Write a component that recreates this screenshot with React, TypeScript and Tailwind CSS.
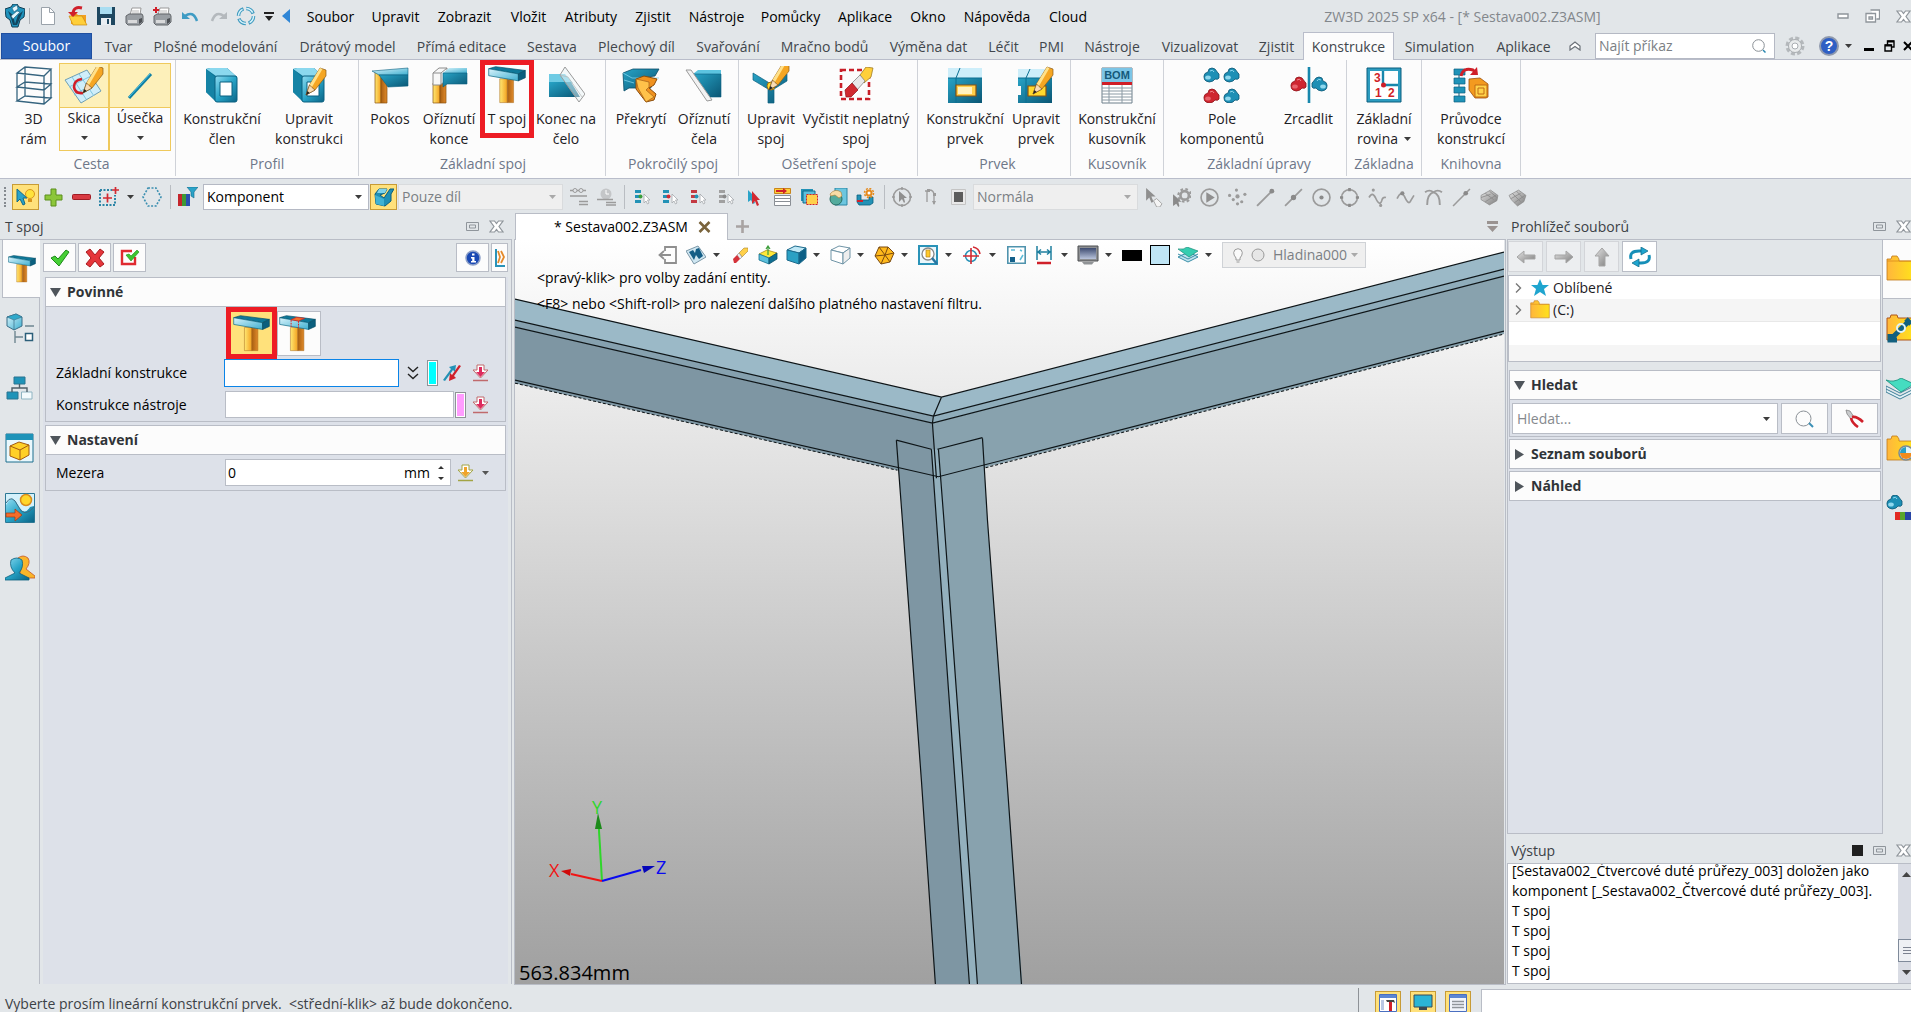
import React from "react";

type Kids = { children?: React.ReactNode };

function Svg({ w, h, v, children }: { w: number; h: number; v: string } & Kids) {
  return (
    <svg width={w} height={h} viewBox={v} fill="none" className="block shrink-0" aria-hidden="true">
      {children}
    </svg>
  );
}

function SharedGradients() {
  return (
    <svg width="0" height="0" className="absolute" aria-hidden="true">
      <defs>
        <linearGradient id="teal" x1="0" y1="0" x2="1" y2="1">
          <stop offset="0" stopColor="#8fdcf2" />
          <stop offset=".5" stopColor="#27a3c6" />
          <stop offset="1" stopColor="#0b6486" />
        </linearGradient>
        <linearGradient id="tealDark" x1="0" y1="0" x2="1" y2="1">
          <stop offset="0" stopColor="#27a3c6" />
          <stop offset="1" stopColor="#0a5674" />
        </linearGradient>
        <linearGradient id="tealLight" x1="0" y1="0" x2="1" y2="1">
          <stop offset="0" stopColor="#d8f3fb" />
          <stop offset="1" stopColor="#3eafd0" />
        </linearGradient>
        <linearGradient id="gold" x1="0" y1="0" x2="1" y2="0">
          <stop offset="0" stopColor="#ffe873" />
          <stop offset="1" stopColor="#f3a01f" />
        </linearGradient>
        <linearGradient id="folder" x1="0" y1="0" x2="1" y2="0">
          <stop offset="0" stopColor="#ffb63c" />
          <stop offset="1" stopColor="#ffe11c" />
        </linearGradient>
        <linearGradient id="brown" x1="0" y1="0" x2="1" y2="0">
          <stop offset="0" stopColor="#a85f12" />
          <stop offset="1" stopColor="#e08a2a" />
        </linearGradient>
        <linearGradient id="gray" x1="0" y1="0" x2="1" y2="1">
          <stop offset="0" stopColor="#e4e4e4" />
          <stop offset="1" stopColor="#7c7c7c" />
        </linearGradient>
        <linearGradient id="screen" x1="0" y1="0" x2="0" y2="1">
          <stop offset="0" stopColor="#3d4b70" />
          <stop offset="1" stopColor="#b9c4dc" />
        </linearGradient>
      </defs>
    </svg>
  );
}

function Caret({ c = "#3c3c3c" }: { c?: string }) {
  return (
    <Svg w={7} h={4} v="0 0 7 4">
      <path d="M0 0h7L3.500 4z" fill={c} />
    </Svg>
  );
}

const Pencil = () => (
  <g>
    <path d="M15 28l3.500-10L29 1l6 2v6L24 23z" fill="#f5a623" stroke="#8a5a18" strokeWidth=".7" />
    <path d="M18.500 18L29 1l2.500 1L21 20z" fill="#ffe18a" />
    <path d="M15 28l3.500-10 2.500 2.500L24 23z" fill="#f9dcb4" stroke="#6a4a20" strokeWidth=".6" />
    <path d="M15 28l1.400-4 2.300 2z" fill="#222" />
  </g>
);

const Tube = () => (
  <g>
    <path d="M2 2l4-1h17l10 9v22l-2 3H13L2 25z" fill="#0d7394" />
    <path d="M2 2l4-1h17l9 8H12z" fill="#8bd8ee" />
    <path d="M2 2l9 8v24L2 25z" fill="#1583a5" />
    <path d="M11 11q0-2 2-2h18q2 0 2 2v22q0 2-2 2H13q-2 0-2-2z" fill="url(#teal)" stroke="#0b6080" />
    <path d="M16 15h12v14H16z" fill="#fff" stroke="#0b6080" />
  </g>
);

const TJoint = ({ s = 36, split = false }: { s?: number; split?: boolean }) => (
  <Svg w={s} h={s} v="0 0 110 108">
    <path d="M34 36h22v69H34z" fill="url(#gold)" stroke="#a8691c" strokeWidth="1.500" />
    <path d="M56 38h18v67H56z" fill="url(#brown)" stroke="#a8691c" strokeWidth="1.500" />
    <path d="M2 7L22 1l86 11-20 10z" fill="#0f7898" stroke="#084d66" strokeWidth="2" />
    <path d="M2 7l86 15v20L2 27z" fill="url(#tealLight)" stroke="#0a6480" strokeWidth="2" />
    <path d="M88 22l20-10v21L88 42z" fill="#0b5f7e" stroke="#084d66" strokeWidth="2" />
    {split && (
      <g>
        <path d="M36 13l16-7 24 3-18 8z" fill="#f3702c" stroke="#e02020" strokeWidth="2" />
        <path d="M36 14v20M58 17v20" stroke="#e02020" strokeWidth="3" strokeDasharray="5 3" />
      </g>
    )}
  </Svg>
);

const Blob = ({ x, y, red = false }: { x: number; y: number; red?: boolean }) => (
  <g transform={`translate(${x} ${y})`}>
    <path
      d="M1 8q0-3 4-4l1-3q3-2 6 0l3 4 1 1v4q-1 2-4 1l-2 2q-4 2-7 0-2-1-2-4z"
      fill={red ? "#cf2630" : "#1d8fb5"}
      stroke={red ? "#8e1118" : "#0a5674"}
      strokeWidth=".8"
    />
    <ellipse cx="5" cy="9.500" rx="2.800" ry="2" fill={red ? "#e8636a" : "#8fd8ee"} />
    <path d="M7 3q3-2 4 1" stroke={red ? "#f08a8f" : "#8fd8ee"} />
  </g>
);

const art = {
  frame: (
    <Svg w={38} h={40} v="0 0 38 40">
      <g stroke="#35647f" strokeWidth="1.300">
        <path d="M2 8L10 2l26 2-7 7zM2 22l8-5 26 2-7 6zM2 36l8-5 26 2-7 6zM2 8v28M10 2v29M36 4v29M29 11v28" />
      </g>
    </Svg>
  ),
  sketch: (
    <Svg w={40} h={38} v="0 0 40 38">
      <path d="M1 13L23 3l14 21-20 12z" fill="#cfeefa" stroke="#6f9fb4" />
      <path d="M8 10l14 22M15 7l15 22M5 20l22-11M10 28l22-13" stroke="#7fc6e0" />
      <path d="M18 12q-8 1-8 8 1 7 9 6" stroke="#d11d28" strokeWidth="2.600" />
      <g transform="translate(4 -2)">
        <Pencil />
      </g>
    </Svg>
  ),
  line: (
    <Svg w={26} h={28} v="0 0 26 28">
      <path d="M2 26L24 2" stroke="#0f7fa4" strokeWidth="3" />
      <path d="M2 25L23 2" stroke="#4cc0e2" strokeWidth="1" />
    </Svg>
  ),
  tube: (
    <Svg w={36} h={36} v="0 0 36 36">
      <Tube />
    </Svg>
  ),
  tubeEdit: (
    <Svg w={36} h={36} v="0 0 36 36">
      <Tube />
      <Pencil />
    </Svg>
  ),
  miter: (
    <Svg w={38} h={38} v="0 0 38 38">
      <path d="M4 6h6v31H4z" fill="url(#gold)" stroke="#8a5210" strokeWidth=".7" />
      <path d="M10 12l6 4v21h-6z" fill="url(#brown)" stroke="#8a5210" strokeWidth=".7" />
      <path d="M1 5l36-3v7H8z" fill="url(#tealLight)" stroke="#0b6080" strokeWidth=".6" />
      <path d="M8 9h29v11l-20 1z" fill="url(#tealDark)" stroke="#0b6080" strokeWidth=".6" />
    </Svg>
  ),
  trimEnd: (
    <Svg w={38} h={38} v="0 0 38 38">
      <path d="M3 17h7v20H3z" fill="url(#gold)" stroke="#8a5210" strokeWidth=".7" />
      <path d="M10 17h6v20h-6z" fill="url(#brown)" stroke="#8a5210" strokeWidth=".7" />
      <path d="M3 7l6-5h8v12l-7 5H3zM3 7h8v11M11 7l6-5" fill="#f7f7f7" stroke="#8d8d8d" />
      <path d="M13 7l6-5h18v5z" fill="url(#tealLight)" />
      <path d="M13 7h24v11H17l-4 3z" fill="url(#tealDark)" stroke="#0b6080" strokeWidth=".6" />
    </Svg>
  ),
  endFace: (
    <Svg w={38} h={38} v="0 0 38 38">
      <path d="M2 8h16l8 9H2z" fill="#6fcbe4" />
      <path d="M2 16h22l9 15H2z" fill="url(#tealDark)" />
      <path d="M13 9l5-8 20 27-6 8z" fill="#eaf3f6" fillOpacity=".5" stroke="#9a9a9a" />
      <path d="M13 9l8 2 14 20" stroke="#b5b5b5" strokeWidth=".7" />
    </Svg>
  ),
  overlap: (
    <Svg w={40} h={36} v="0 0 40 36">
      <path d="M2 6l10-4h26l-4 7-8 1 4 6v5H8l-5 3z" fill="url(#tealDark)" stroke="#0a4d68" strokeWidth=".8" />
      <path d="M2 6l9 5h27M3 13l10 3" stroke="#7fd2ea" strokeWidth=".8" />
      <path d="M15 12l8-3 13 3-3 6-5 3 7 6-2 6-8 2-10-13z" fill="#f0921f" stroke="#8a4d0c" />
      <path d="M15 12l13 3v5l-3 3 8 7-8 5-8-14z" fill="#ffc24a" stroke="#a2601a" strokeWidth=".7" />
    </Svg>
  ),
  trimFace: (
    <Svg w={38} h={34} v="0 0 38 34">
      <path d="M8 6l5-4h23v4z" fill="#5cc4e0" />
      <path d="M9 6h27v23H23z" fill="url(#tealDark)" stroke="#0b6080" strokeWidth=".6" />
      <path d="M1 2h5l21 30-5 1z" fill="#f2f2f2" stroke="#9a9a9a" />
    </Svg>
  ),
  editJoint: (
    <Svg w={38} h={38} v="0 0 38 38">
      <path d="M1 7l18 11 16-10v7L22 23v14h-6V23L1 14z" fill="url(#tealDark)" stroke="#0b6080" strokeWidth=".7" />
      <circle cx="19" cy="20" r="4" fill="#ffd92e" stroke="#a06d10" />
      <g transform="translate(2 -4)">
        <Pencil />
      </g>
    </Svg>
  ),
  cleanJoint: (
    <Svg w={36} h={36} v="0 0 36 36">
      <path d="M3 3h28v29H3z" stroke="#c81f28" strokeWidth="2.600" strokeDasharray="5 3" />
      <path d="M8 24L25 4l9-2-2 9-15 18-7 2z" fill="#fff" />
      <path d="M22 8l6-8 7 1-2 9-7 6z" fill="#ffcf3a" stroke="#94701a" strokeWidth=".7" />
      <path d="M14 16l8-8 5 6-8 9z" fill="#e8e8e8" stroke="#777" strokeWidth=".7" />
      <path d="M7 23l7-7 6 7-7 7H8z" fill="#d02a30" stroke="#8e1118" strokeWidth=".7" />
    </Svg>
  ),
  feature: (
    <Svg w={34} h={36} v="0 0 34 36">
      <path d="M0 1h34v10H0z" fill="#cdeefa" />
      <path d="M0 11h34v25H0z" fill="url(#tealDark)" />
      <path d="M12 1L8 11v25M0 11h34" stroke="#0b6f92" />
      <path d="M8 18h20v11H8z" fill="#ffcf4a" stroke="#8a5210" strokeWidth="1.200" />
      <path d="M10 20h14v7H10z" fill="#fff2c0" />
    </Svg>
  ),
  featureEdit: (
    <Svg w={36} h={38} v="0 0 36 38">
      <path d="M0 3h34v9H0z" fill="#cdeefa" />
      <path d="M0 12h34v25H0v-8h3v-9H0z" fill="url(#tealDark)" />
      <path d="M12 3L8 12v25M0 12h34" stroke="#0b6f92" />
      <path d="M10 20h18v10H10z" fill="#ffd92e" stroke="#8a5210" strokeWidth="1.200" />
      <Pencil />
    </Svg>
  ),
  bom: (
    <Svg w={32} h={37} v="0 0 32 37">
      <path d="M1 1h30v35H1z" fill="#fff" stroke="#6d7f8a" />
      <path d="M1 1h30v14H1z" fill="#7cc5e6" />
      <path d="M1 15h30v3H1z" fill="#d01f27" />
      <path d="M1 21h30M1 24h30M1 27h30M1 30h30M1 33h30M8 18v18M21 18v18" stroke="#8b9aa4" />
      <text x="16" y="12" textAnchor="middle" fontSize="11" fontWeight="700" fontFamily="Liberation Sans, sans-serif" fill="#15597a">
        BOM
      </text>
    </Svg>
  ),
  pattern: (
    <Svg w={38} h={36} v="0 0 38 36">
      <Blob x={0} y={1} />
      <Blob x={20} y={1} />
      <Blob x={0} y={22} red />
      <Blob x={20} y={22} />
    </Svg>
  ),
  mirror: (
    <Svg w={40} h={36} v="0 0 40 36">
      <path d="M20 0v36" stroke="#1787ac" strokeWidth="2.600" />
      <Blob x={1} y={10} red />
      <g transform="translate(40 0) scale(-1 1)">
        <Blob x={1} y={10} />
      </g>
    </Svg>
  ),
  datum: (
    <Svg w={36} h={36} v="0 0 36 36">
      <path d="M1 1h34v34H1z" fill="#2c9cc0" stroke="#0b5f7e" />
      <path d="M4 4h28v28H4z" fill="#fff" />
      <path d="M17 4v15M18 18h14" stroke="#1787ac" strokeWidth="2.400" />
      <circle cx="17.500" cy="18" r="2.500" fill="#cf1f28" />
      <g fontSize="12" fontWeight="700" fontFamily="Liberation Sans, sans-serif" fill="#cf1f28">
        <text x="8" y="15">3</text>
        <text x="9" y="30">1</text>
        <text x="22" y="30">2</text>
      </g>
    </Svg>
  ),
  wizard: (
    <Svg w={36} h={36} v="0 0 36 36">
      <path d="M6 2v32" stroke="#0b5f7e" />
      <path d="M1 2h11v6H1zM1 11h11v6H1zM1 20h11v6H1zM1 29h11v6H1z" fill="#1f93b8" stroke="#0b5f7e" strokeWidth=".7" />
      <path d="M8 9q2-9 12-6l2 2" stroke="#cf1f28" strokeWidth="3" />
      <path d="M17 8h8l-1-8z" fill="#cf1f28" />
      <path d="M16 12l11-1 8 6v13l-2 1H22l-6-8z" fill="#f39a1f" stroke="#9a4d0a" strokeWidth=".8" />
      <path d="M22 18h12v12H22zM25 21h6v6h-6z" fill="#ffd24a" stroke="#c06a14" />
    </Svg>
  ),
};

const menus = [
  ["Soubor", "w-[65px]"],
  ["Upravit", "w-[65px]"],
  ["Zobrazit", "w-[73px]"],
  ["Vložit", "w-[55px]"],
  ["Atributy", "w-[70px]"],
  ["Zjistit", "w-[54px]"],
  ["Nástroje", "w-[73px]"],
  ["Pomůcky", "w-[75px]"],
  ["Aplikace", "w-[74px]"],
  ["Okno", "w-[52px]"],
  ["Nápověda", "w-[86px]"],
  ["Cloud", "w-[56px]"],
];

const tabs = [
  ["Tvar", "w-[47px]"],
  ["Plošné modelování", "w-[147px]"],
  ["Drátový model", "w-[117px]"],
  ["Přímá editace", "w-[111px]"],
  ["Sestava", "w-[70px]"],
  ["Plechový díl", "w-[99px]"],
  ["Svařování", "w-[84px]"],
  ["Mračno bodů", "w-[109px]"],
  ["Výměna dat", "w-[99px]"],
  ["Léčit", "w-[51px]"],
  ["PMI", "w-[45px]"],
  ["Nástroje", "w-[76px]"],
  ["Vizualizovat", "w-[100px]"],
  ["Zjistit", "w-[53px]"],
  ["Konstrukce", "w-[91px]"],
  ["Simulation", "w-[91px]"],
  ["Aplikace", "w-[77px]"],
];

const MiniPin = () => (
  <Svg w={13} h={9} v="0 0 13 9">
    <path d="M.5.5h12v8H.5zM3.500 3h6v3h-6z" stroke="#8f959b" />
  </Svg>
);
const MiniClose = () => (
  <Svg w={15} h={13} v="0 0 15 13">
    <path d="M1 1h4.500l2 2.500 2-2.500H14l-4 5.500 4 5.500H9.500l-2-2.500-2 2.500H1l4-5.500z" fill="#fff" stroke="#8f959b" strokeWidth="1.200" />
  </Svg>
);

function TitleBar() {
  return (
    <header className="flex h-8 shrink-0 items-center">
      <div className="flex w-[298px] shrink-0 items-center pl-[5px]">
        <Svg w={20} h={24} v="0 0 20 24">
          <path d="M0 5l6-2 2-3h4l2 3 6 2-1 8-4 3-2 7H7l-2-7-4-3z" fill="#1f93bd" stroke="#123f55" />
          <path d="M3 7l5 4 2 9 3-9 5-4-3 7-3 7H8l-2-7z" fill="#12465f" />
          <path d="M7 4l5-3 1 4-4 3zM6 12l6-5 3 1-7 7z" fill="#e2f5fb" stroke="#1d5d78" strokeWidth=".6" />
        </Svg>
        <span className="mx-1 h-4 w-px bg-[#a9aeb4]" />
        <button aria-label="Nový" className="flex w-7 justify-center">
          <Svg w={14} h={18} v="0 0 14 18">
            <path d="M.5.500h8l5 5v12H.5z" fill="#fff" stroke="#9aa2aa" />
            <path d="M8.500.5v5h5" stroke="#9aa2aa" />
          </Svg>
        </button>
        <button aria-label="Otevřít" className="ml-0.5 flex w-7 justify-center">
          <Svg w={20} h={20} v="0 0 20 20">
            <path d="M3 8l5-1 2 2h8v9H3z" fill="#f3a01f" />
            <path d="M1 10h13l5 9H5z" fill="#ffcf3a" stroke="#c98a17" strokeWidth=".7" />
            <path d="M14 2Q6 0 5 7" stroke="#d0202a" strokeWidth="3" />
            <path d="M0 6h10l-5 5z" fill="#d0202a" />
          </Svg>
        </button>
        <button aria-label="Uložit" className="flex w-7 justify-center">
          <Svg w={20} h={20} v="0 0 20 20">
            <path d="M1 1h18v18H1z" fill="#1e4760" />
            <path d="M4 1h12v7H4z" fill="#a9ddf1" />
            <path d="M5 12h10v7H5z" fill="#e9eef2" />
            <path d="M11 13h2v5h-2z" fill="#1e4760" />
          </Svg>
        </button>
        {[false, true].map((plus) => (
          <button key={String(plus)} aria-label={plus ? "Dávkový tisk" : "Tisk"} className="flex w-7 justify-center">
            <Svg w={19} h={19} v="0 0 19 19">
              <path d="M5 8l2-7h9l-1 7z" fill="#fff" stroke="#999" />
              <path d="M7 4h7M7 6h7" stroke="#bbb" />
              <path d="M1 9l3-2h13l1 2v6l-3 3H3l-2-2z" fill="#9a9fa4" stroke="#62666a" />
              <path d="M3 13h9v3H3z" fill="#d9dadb" />
              <path d="M14 12l3-1v4l-3 2z" fill="#4c5054" />
              {plus && <path d="M3 0v6M0 3h6" stroke="#d0202a" strokeWidth="2" />}
            </Svg>
          </button>
        ))}
        <button aria-label="Zpět" className="flex w-7 justify-center">
          <Svg w={17} h={11} v="0 0 17 11">
            <path d="M3 5q8-6 12 5" stroke="#3f9cc4" strokeWidth="2.500" />
            <path d="M0 1v7h8z" fill="#3f9cc4" />
          </Svg>
        </button>
        <button aria-label="Vpřed" className="flex w-7 justify-center">
          <Svg w={17} h={11} v="0 0 17 11">
            <path d="M14 5Q6-1 2 10" stroke="#b4b9bd" strokeWidth="2.500" />
            <path d="M17 1v7H9z" fill="#b4b9bd" />
          </Svg>
        </button>
        <button aria-label="Obnovit" className="flex w-7 justify-center">
          <Svg w={20} h={20} v="0 0 20 20">
            <circle cx="10" cy="10" r="7.500" stroke="#3e9abf" strokeWidth="3.500" strokeDasharray="9 2.780" />
            <circle cx="10" cy="10" r="7.500" stroke="#d8f2fb" strokeWidth="1.500" strokeDasharray="8 3.780" />
          </Svg>
        </button>
        <button aria-label="Více" className="ml-1 mr-2 flex">
          <Svg w={10} h={9} v="0 0 10 9">
            <path d="M0 0h10v2H0zM1 4h8L5 9z" fill="#222" />
          </Svg>
        </button>
        <button aria-label="Sbalit menu" className="flex">
          <Svg w={8} h={14} v="0 0 8 14">
            <path d="M8 0v14L0 7z" fill="#2f86d6" />
          </Svg>
        </button>
      </div>
      <nav className="flex pt-0.5 text-black">
        {menus.map(([t, w]) => (
          <button key={t} className={w + " flex justify-center whitespace-nowrap"}>
            {t}
          </button>
        ))}
      </nav>
      <div className="flex-1 pl-[92px] pt-0.5 text-center text-[#82878c]">ZW3D 2025 SP x64 - [* Sestava002.Z3ASM]</div>
      <div className="ml-[100px] flex shrink-0 items-center gap-4">
        <button aria-label="Minimalizovat">
          <Svg w={12} h={6} v="0 0 12 6">
            <path d="M1 1h10v4H1z" fill="#fff" stroke="#8f959b" strokeWidth="1.400" />
          </Svg>
        </button>
        <button aria-label="Obnovit okno">
          <Svg w={15} h={14} v="0 0 15 14">
            <path d="M5.500 1h9v9h-3M1 4.500h9.500V13H1zM4 8h3.500v2H4z" fill="#fff" stroke="#8f959b" strokeWidth="1.300" />
          </Svg>
        </button>
        <button aria-label="Zavřít">
          <MiniClose />
        </button>
      </div>
    </header>
  );
}

function TabRow() {
  return (
    <div className="flex h-7 shrink-0 items-stretch border-b border-[#b9bdca]">
      <button className="mx-px mt-px w-[91px] border border-[#1f4fa0] bg-[#2a62b8] text-white">Soubor</button>
      <nav className="ml-0.5 flex text-[#41464c]">
        {tabs.map(([t, w], i) =>
          t === "Konstrukce" ? (
            <button key={i} className={w + " -mb-px flex items-center justify-center border border-b-0 border-[#b9bdca] bg-[#fcfcfc]"}>
              {t}
            </button>
          ) : (
            <button key={i} className={w + " flex items-center justify-center whitespace-nowrap pt-0.5"}>
              {t}
            </button>
          ),
        )}
      </nav>
      <div className="flex flex-1 items-center justify-end">
        <button aria-label="Sbalit pás">
          <Svg w={12} h={10} v="0 0 12 10">
            <path d="M1 5l5-4 5 4v4L6 5.500 1 9z" fill="#fff" stroke="#6b7178" strokeWidth="1.200" />
          </Svg>
        </button>
        <div className="ml-3.5 flex h-[26px] w-[180px] items-center border border-[#b5b9c4] bg-white pr-2">
          <input aria-label="Najít příkaz" placeholder="Najít příkaz" className="min-w-0 flex-1 bg-transparent pl-[3px] outline-none placeholder:text-[#7b7f84]" />
          <Svg w={14} h={14} v="0 0 14 14">
            <circle cx="6.500" cy="6.500" r="5.800" stroke="#8a9096" />
            <path d="M11 11l2.500 2.500" stroke="#2a87b0" strokeWidth="1.500" />
          </Svg>
        </div>
        <button aria-label="Nastavení aplikace" className="ml-2.5">
          <Svg w={20} h={20} v="0 0 20 20">
            <circle cx="10" cy="10" r="8" stroke="#b4b8bb" strokeWidth="3" strokeDasharray="4 2.280" />
            <circle cx="10" cy="10" r="6.500" fill="#e9ebec" stroke="#a9adb1" />
            <circle cx="10" cy="10" r="3" fill="#fff" stroke="#a9adb1" />
          </Svg>
        </button>
        <button aria-label="Nápověda" className="ml-3.5 flex items-center gap-1.5">
          <Svg w={20} h={20} v="0 0 20 20">
            <circle cx="10" cy="10" r="9" fill="#2f5fc4" stroke="#8f99ad" strokeWidth="2" />
            <text x="10" y="15" textAnchor="middle" fontSize="14" fontWeight="700" fontFamily="Liberation Sans, sans-serif" fill="#fff">
              ?
            </text>
          </Svg>
          <Caret />
        </button>
        <button aria-label="Minimalizovat dokument" className="ml-3 flex h-2.5 items-end">
          <span className="h-[3px] w-2.5 bg-black" />
        </button>
        <button aria-label="Obnovit dokument" className="ml-2.5">
          <Svg w={11} h={12} v="0 0 11 12">
            <path d="M3.500 5V1H10v6H8M1 5h6.500v6H1z" stroke="#000" strokeWidth="1.400" />
            <path d="M3.500 1.500H10M1 5.500h6.500" stroke="#000" strokeWidth="2" />
          </Svg>
        </button>
        <button aria-label="Zavřít dokument" className="ml-2">
          <Svg w={8} h={10} v="0 0 8 10">
            <path d="M1 1l8 8M1 9l8-8" stroke="#000" strokeWidth="2" />
          </Svg>
        </button>
      </div>
    </div>
  );
}

type Btn = { w: string; a: string; b?: string; icon: React.ReactNode; hot?: boolean; mark?: boolean; caret?: boolean };

function RibbonButton({ w, a, b, icon, hot, mark, caret }: Btn) {
  if (hot) {
    return (
      <button className={w + " flex h-[88px] flex-col items-center border border-[#efc95c]"}>
        <span className="flex h-11 w-full items-center justify-center border-b border-[#efc95c] bg-[#fdf0ba]">{icon}</span>
        <span className="h-5 leading-5">{a}</span>
        <span className="flex h-5 items-center">
          <Caret />
        </span>
      </button>
    );
  }
  return (
    <button className={w + " relative flex flex-col items-center whitespace-nowrap leading-5"}>
      <span className="mb-0.5 flex h-11 items-center justify-center">{icon}</span>
      <span>{a}</span>
      {b && (
        <span className="flex items-center gap-1.5">
          {b}
          {caret && <Caret />}
        </span>
      )}
      {mark && <span className="absolute -top-[3px] left-px h-[78px] w-[54px] border-[5px] border-[#ed1c24]" />}
    </button>
  );
}

const ribbon: { name: string; w: string; btns: Btn[] }[] = [
  {
    name: "Cesta",
    w: "w-[176px] pl-2",
    btns: [
      { w: "w-[51px]", a: "3D", b: "rám", icon: art.frame },
      { w: "w-[50px]", a: "Skica", icon: art.sketch, hot: true },
      { w: "w-[62px]", a: "Úsečka", icon: art.line, hot: true },
    ],
  },
  {
    name: "Profil",
    w: "w-[183px]",
    btns: [
      { w: "w-[92px]", a: "Konstrukční", b: "člen", icon: art.tube },
      { w: "w-[82px]", a: "Upravit", b: "konstrukci", icon: art.tubeEdit },
    ],
  },
  {
    name: "Základní spoj",
    w: "w-[247px] pl-0.5",
    btns: [
      { w: "w-[58px]", a: "Pokos", icon: art.miter },
      { w: "w-[60px]", a: "Oříznutí", b: "konce", icon: art.trimEnd },
      { w: "w-[56px]", a: "T spoj", icon: <TJoint s={38} />, mark: true },
      { w: "w-[62px]", a: "Konec na", b: "čelo", icon: art.endFace },
    ],
  },
  {
    name: "Pokročilý spoj",
    w: "w-[133px] pl-0.5",
    btns: [
      { w: "w-[66px]", a: "Překrytí", icon: art.overlap },
      { w: "w-[60px]", a: "Oříznutí", b: "čela", icon: art.trimFace },
    ],
  },
  {
    name: "Ošetření spoje",
    w: "w-[179px] pl-0.5",
    btns: [
      { w: "w-[60px]", a: "Upravit", b: "spoj", icon: art.editJoint },
      { w: "w-[110px]", a: "Vyčistit neplatný", b: "spoj", icon: art.cleanJoint },
    ],
  },
  {
    name: "Prvek",
    w: "w-[153px] pl-[7px]",
    btns: [
      { w: "w-20", a: "Konstrukční", b: "prvek", icon: art.feature },
      { w: "w-[62px]", a: "Upravit", b: "prvek", icon: art.featureEdit },
    ],
  },
  { name: "Kusovník", w: "w-[93px]", btns: [{ w: "w-[92px]", a: "Konstrukční", b: "kusovník", icon: art.bom }] },
  {
    name: "Základní úpravy",
    w: "w-[183px] pl-2",
    btns: [
      { w: "w-[100px]", a: "Pole", b: "komponentů", icon: art.pattern },
      { w: "w-[73px]", a: "Zrcadlit", icon: art.mirror },
    ],
  },
  { name: "Základna", w: "w-[75px]", btns: [{ w: "w-[74px]", a: "Základní", b: "rovina", icon: art.datum, caret: true }] },
  { name: "Knihovna", w: "w-[99px]", btns: [{ w: "w-[98px]", a: "Průvodce", b: "konstrukcí", icon: art.wizard }] },
];

function Ribbon() {
  return (
    <div className="flex h-[119px] shrink-0 border-b border-[#b9bdca] bg-[#fcfcfc] pb-0.5 text-[#1d2024]">
      {ribbon.map((g) => (
        <section key={g.name} className={g.w + " flex shrink-0 flex-col border-r border-[#cfd2d8] pt-[3px]"}>
          <div className="flex h-[91px] items-start">
            {g.btns.map((b, i) => (
              <RibbonButton key={i} {...b} />
            ))}
          </div>
          <h2 className="whitespace-nowrap text-center leading-5 text-[#6e7789]">{g.name}</h2>
        </section>
      ))}
    </div>
  );
}

function Drop({ label, value, w, off = false }: { label: string; value: string; w: string; off?: boolean }) {
  return (
    <span className={w + " relative mx-px flex h-[26px] shrink-0 items-center border " + (off ? "border-[#d9dbdd] bg-[#efefef]" : "border-[#b5b9c4] bg-white")}>
      <select
        aria-label={label}
        disabled={off}
        className={"h-full w-full appearance-none bg-transparent pl-[3px] outline-none " + (off ? "text-[#7b7f84]" : "text-black")}
      >
        <option>{value}</option>
      </select>
      <span className="pointer-events-none absolute right-1.5">
        <Caret c={off ? "#a9a9a9" : "#3c3c3c"} />
      </span>
    </span>
  );
}

function Tool({ label, children }: { label: string } & Kids) {
  return (
    <button aria-label={label} className="flex w-7 shrink-0 items-center justify-center">
      {children}
    </button>
  );
}

const Sep = () => (
  <span className="flex w-2 shrink-0 justify-center">
    <span className="h-6 w-px bg-[#b9bdc2]" />
  </span>
);

const ListPick = ({ c, d }: { c: string; d: string }) => (
  <Svg w={16} h={16} v="0 0 16 16">
    <path d="M1 1h6v3H1zM1 6h6v3H1zM1 11h6v3H1z" fill={c} />
    <circle cx="6.500" cy="7.500" r="2" fill={d} />
    <path d="M10 5v9l2-2 1.500 3 1.500-1-1.500-3H16z" fill="#fff" stroke="#a4a8ac" strokeWidth=".8" />
  </Svg>
);

const G = "#9b9b9b";

const grayTools: React.ReactNode[] = [
  <g>
    <path d="M2 0v12l3-3 2 5 2-1-2-5h4z" fill="#8f8f8f" />
    <path d="M9 12l3-2 5 5-2 3h-3z" fill="#f4f4f4" stroke={G} strokeWidth=".8" />
  </g>,
  <g>
    <circle cx="12" cy="7" r="4" stroke={G} strokeWidth="2.500" />
    <circle cx="12" cy="7" r="6" stroke={G} strokeWidth="2" strokeDasharray="2.500 2.200" />
    <path d="M1 6v11l3-2 2 3 1-1-1-4h3z" fill="#8a8a8a" />
  </g>,
  <g>
    <circle cx="9" cy="9" r="8" stroke={G} strokeWidth="1.600" />
    <path d="M6 4l8 5-8 5z" fill="#8f8f8f" />
  </g>,
  <g fill={G}>
    <circle cx="1.500" cy="7" r="1.500" />
    <circle cx="5" cy="11" r="1.500" />
    <circle cx="9" cy="8" r="2" />
    <circle cx="8" cy="2" r="1.500" />
    <circle cx="13" cy="13" r="1.500" />
    <circle cx="16" cy="6" r="1.500" />
    <circle cx="9" cy="15" r="1.500" />
  </g>,
  <g>
    <path d="M1 17L16 2" stroke={G} strokeWidth="1.800" />
    <circle cx="15" cy="3" r="2.300" fill="#8a8a8a" />
  </g>,
  <g>
    <path d="M1 17L17 1" stroke={G} strokeWidth="1.600" />
    <circle cx="9" cy="9" r="2.500" fill="#8a8a8a" />
  </g>,
  <g>
    <circle cx="9" cy="9" r="8" stroke={G} strokeWidth="1.600" />
    <circle cx="9" cy="9" r="2" fill="#8a8a8a" />
  </g>,
  <g>
    <circle cx="9" cy="9" r="7.500" stroke={G} strokeWidth="1.500" />
    <path d="M9 0v3M9 15v3M0 9h3M15 9h3" stroke="#8a8a8a" strokeWidth="2.500" />
  </g>,
  <g>
    <path d="M1 9q3-6 6 0 4 9 6 3 1-4 4-3" stroke={G} strokeWidth="1.600" />
    <circle cx="5" cy="2" r="1.500" fill={G} />
    <circle cx="12" cy="16.500" r="1.500" fill={G} />
  </g>,
  <g>
    <path d="M1 10q4-8 7-2 4 9 6 4l3-5" stroke={G} strokeWidth="1.600" />
    <circle cx="6" cy="5" r="2" fill="#8a8a8a" />
  </g>,
  <path d="M1 4q4-3 8 0 4-3 8 0M3 16Q3 6 9 4M15 16Q15 6 9 4" stroke={G} strokeWidth="1.800" />,
  <g>
    <path d="M1 17L17 1" stroke={G} strokeWidth="1.500" />
    <circle cx="13" cy="5" r="2.200" fill="#8a8a8a" />
  </g>,
  <g>
    <path d="M1 7l9-5 7 5-1 5-7 4-8-5z" fill="url(#gray)" stroke="#8a8a8a" strokeWidth=".7" />
    <path d="M5 5l8 6M9 3l7 6M1 9l9-3M5 13l10-6" stroke="#8a8a8a" strokeWidth=".8" />
  </g>,
  <g>
    <path d="M1 7l9-5 7 5-2 6-6 4-6-6z" fill="url(#gray)" stroke="#8a8a8a" strokeWidth=".7" />
    <path d="M4 5l8 8M8 3l7 7M3 10l9-5M6 14l10-7" stroke="#8a8a8a" strokeWidth=".8" />
  </g>,
];

function FilterBar() {
  return (
    <div className="flex h-[34px] shrink-0 items-center pt-0.5">
      <span className="mx-1 h-5 w-0.5 border-l-2 border-dotted border-[#858a90]" />
      <button aria-label="Výběr" className="ml-0.5 flex h-[26px] w-[27px] items-center justify-center border border-[#c79b36] bg-[#ffe17b]">
        <Svg w={20} h={18} v="0 0 20 18">
          <path d="M1 1v13l3-3 3 6 2-1-2-6h4z" fill="#2aa3c8" stroke="#116a8a" />
          <circle cx="14" cy="6" r="4.500" fill="#ffe23a" stroke="#d9951c" />
          <path d="M12 11h4v3h-4z" fill="#d9951c" />
        </Svg>
      </button>
      <Tool label="Přidat">
        <Svg w={19} h={19} v="0 0 19 19">
          <path d="M7 1h5v6h6v5h-6v6H7v-6H1V7h6z" fill="#8cc63a" stroke="#5b8f1c" />
        </Svg>
      </Tool>
      <Tool label="Odebrat">
        <Svg w={19} h={6} v="0 0 19 6">
          <rect x=".5" y=".5" width="18" height="5" rx="1" fill="#d83a42" stroke="#a01c24" />
        </Svg>
      </Tool>
      <Tool label="Výběr oknem">
        <Svg w={20} h={20} v="0 0 20 20">
          <path d="M1 3h12M1 3v15h15V8" stroke="#2b84a6" strokeWidth="2" strokeDasharray="2 1.500" />
          <path d="M4 11h9M8.500 6.500v9M13 3h7M16.500 0v7" stroke="#d22a32" strokeWidth="1.700" />
        </Svg>
      </Tool>
      <span className="flex w-[15px] justify-center">
        <Caret />
      </span>
      <Tool label="Polygon">
        <Svg w={20} h={20} v="0 0 20 20">
          <path d="M6 1h8l5 9-5 9H6l-5-9z" stroke="#3b8fb0" strokeWidth="1.600" strokeDasharray="2 1.500" />
        </Svg>
      </Tool>
      <Sep />
      <Tool label="Filtr">
        <Svg w={20} h={20} v="0 0 20 20">
          <path d="M0 7h4v12H0z" fill="#c4252c" />
          <path d="M4 7h4v12H4z" fill="#3f9a35" />
          <path d="M8 7h4v12H8z" fill="#2b4fb0" />
          <path d="M9 0h11l-4 5v6l-3-2V5z" fill="#2aa3c8" stroke="#116a8a" strokeWidth=".6" />
        </Svg>
      </Tool>
      <Drop label="Filtr entit" value="Komponent" w="w-[166px]" />
      <button aria-label="Filtr dílu" className="flex h-[26px] w-[27px] items-center justify-center border border-[#c79b36] bg-[#ffe17b]">
        <Svg w={20} h={20} v="0 0 20 20">
          <path d="M1 7l4-5h8l-2 4-5 2 4 3 6-9h4l-3 5v7l-6 5-9-2z" fill="#1d8fb5" stroke="#0b5f7e" />
          <path d="M5 2h8l-2 4H3z" fill="#7fd2ea" />
          <path d="M1 8l9 4v7l-8-2z" fill="#3fb2d3" />
        </Svg>
      </button>
      <Drop label="Rozsah" value="Pouze díl" w="w-[165px]" off />
      <Tool label="Odkaz">
        <Svg w={19} h={18} v="0 0 19 18">
          <path d="M1 2.500h16M1 8h17M10 16.500h9M10 13.500h9" stroke={G} strokeWidth="1.500" />
          <circle cx="6" cy="2.500" r="2" fill="#e2e5e9" stroke={G} />
          <circle cx="12" cy="2.500" r="2" fill="#e2e5e9" stroke={G} />
        </Svg>
      </Tool>
      <Tool label="Časový odkaz">
        <Svg w={19} h={18} v="0 0 19 18">
          <circle cx="9" cy="6" r="5.500" fill="#c4c6c8" />
          <path d="M9 2v4h3" stroke="#fff" />
          <path d="M0 11.500h16M9 14.500h10M9 17h10" stroke={G} strokeWidth="1.500" />
        </Svg>
      </Tool>
      <Sep />
      <Tool label="Vybrat vše">
        <ListPick c="#2392b6" d="#3b9d3a" />
      </Tool>
      <Tool label="Vybrat další">
        <ListPick c="#2392b6" d="#d22a32" />
      </Tool>
      <Tool label="Zrušit výběr">
        <ListPick c="#c33a42" d="#2392b6" />
      </Tool>
      <Tool label="Výběr vypnut">
        <ListPick c="#a0a0a0" d="#8a8a8a" />
      </Tool>
      <Tool label="Výběr šipkou">
        <Svg w={14} h={17} v="0 0 14 17">
          <path d="M1 1v12l3-2 2 4 2-1-2-5h3z" fill="#2aa3c8" />
          <path d="M5 2v13l3-3 2 5 2-1-2-5h3z" fill="#d22a32" />
        </Svg>
      </Tool>
      <Tool label="Seznam výběru">
        <Svg w={17} h={18} v="0 0 17 18">
          <path d="M.5.500h16v5H.5z" fill="#ffcf3a" stroke="#c9851a" />
          <path d="M2 3h9" stroke="#d0202a" strokeWidth="2" />
          <path d="M9 0l4 3-4 3z" fill="#d0202a" />
          <path d="M.5 7.500h16v3H.5zM.5 10.500h16v3H.5zM.5 13.500h16v4H.5z" fill="#fff" stroke="#8a8f95" />
        </Svg>
      </Tool>
      <Tool label="Výběr rámce">
        <Svg w={19} h={18} v="0 0 19 18">
          <path d="M0 1h12v12H0z" fill="#2392b6" />
          <path d="M2 3h12v12H2z" fill="#5cc0dc" stroke="#116a8a" />
          <path d="M5.500 6.500h11v10h-11z" fill="#ffd04a" stroke="#d0202a" strokeDasharray="2 1" />
        </Svg>
      </Tool>
      <Tool label="Přední výběr">
        <Svg w={19} h={18} v="0 0 19 18">
          <path d="M6 0h12v17H6z" fill="#6cc6df" stroke="#2a86a4" />
          <circle cx="7" cy="11" r="6" fill="#53ab9c" stroke="#2a6d63" />
          <path d="M1 6q5-6 11-2l1 4-3 2-4-3-4 1z" fill="#f7dca6" stroke="#a97c30" strokeWidth=".6" />
        </Svg>
      </Tool>
      <Tool label="Konfigurace výběru">
        <Svg w={20} h={18} v="0 0 20 18">
          <path d="M1 7h4v5h8v-3h4v6l-3 2H3l-2-3z" fill="#2392b6" stroke="#0b5f7e" strokeWidth=".8" />
          <circle cx="13" cy="5" r="2.500" fill="#fff" stroke="#e58a1c" strokeWidth="2" />
          <circle cx="13" cy="5" r="4.500" stroke="#e58a1c" strokeWidth="1.500" strokeDasharray="2 1.500" />
          <path d="M1 13h6" stroke="#d0202a" strokeWidth="2" />
        </Svg>
      </Tool>
      <Sep />
      <Tool label="Kurzor">
        <Svg w={20} h={20} v="0 0 20 20">
          <circle cx="10" cy="10" r="8.500" stroke={G} strokeWidth="1.600" />
          <path d="M10 0v3M10 17v3M0 10h3M17 10h3" stroke={G} strokeWidth="1.500" />
          <path d="M7 4v11l3-3 2 4 1-1-1-4h3z" fill="#8f8f8f" />
        </Svg>
      </Tool>
      <Tool label="Křivka">
        <Svg w={13} h={18} v="0 0 13 18">
          <path d="M1 3h2v11M5 2q5 0 5 5v9" stroke={G} strokeWidth="1.300" />
          <path d="M3 1h3v3H3zM9 5h3v3H9zM8 13h4l-2 4z" fill={G} />
        </Svg>
      </Tool>
      <Tool label="Rámec">
        <Svg w={15} h={16} v="0 0 15 16">
          <path d="M.5.500h14v15H.5z" fill="#e8e8e8" stroke="#c4c4c4" />
          <path d="M3 3h9v10H3z" fill="#5c5c5c" />
        </Svg>
      </Tool>
      <Drop label="Orientace" value="Normála" w="w-[165px]" off />
      {grayTools.map((g, i) => (
        <Tool key={i} label={"Uchopení " + (i + 1)}>
          <Svg w={19} h={19} v="0 0 18 18">
            {g}
          </Svg>
        </Tool>
      ))}
    </div>
  );
}

function PanelTitle({ title, stop = false }: { title: string; stop?: boolean }) {
  return (
    <div className="flex h-[26px] shrink-0 items-center pl-[5px]">
      <h2 className="flex-1 pt-px text-[#3c4146]">{title}</h2>
      {stop && <button aria-label="Zastavit" className="mr-2.5 size-[11px] bg-[#202020]" />}
      <button aria-label="Ukotvit">
        <MiniPin />
      </button>
      <button aria-label="Zavřít panel" className="ml-2.5">
        <MiniClose />
      </button>
    </div>
  );
}

const Tri = ({ open }: { open: boolean }) =>
  open ? (
    <Svg w={11} h={9} v="0 0 11 9">
      <path d="M0 0h11L5.500 9z" fill="#4f555b" />
    </Svg>
  ) : (
    <Svg w={11} h={11} v="0 0 11 11">
      <path d="M1 0v11l9-5.500z" fill="#4f555b" />
    </Svg>
  );

function Section({ title, open = false, children }: { title: string; open?: boolean } & Kids) {
  return (
    <section className="border border-[#b9bdc6] bg-[#dde1e9]">
      <button
        className={
          "flex w-full items-center gap-1.5 bg-[#fcfcfc] pl-1 text-left font-bold text-[#303438] " + (open ? "h-[29px] border-b border-[#b9bdc6]" : "h-7")
        }
      >
        <Tri open={open} />
        {title}
      </button>
      {children}
    </section>
  );
}

const PickDown = ({ c, f, label }: { c: string; f: string; label: string }) => (
  <button aria-label={label} className="flex shrink-0">
    <Svg w={17} h={18} v="0 0 17 18">
      <path d="M5 1h7v5h4l-7.500 8L1 6h4z" fill="#fff" stroke={c} />
      <path d="M7 3h3v5h3l-4.500 5L4 8h3z" fill={f} />
      <path d="M1 16.500h15" stroke={c} strokeWidth="1.500" />
    </Svg>
  </button>
);

const sideIcons = [
  <TJoint s={28} />,
  <Svg w={28} h={30} v="0 0 28 30">
    <path d="M1 4l9-3 6 3v9l-8 4-7-4z" fill="url(#tealLight)" stroke="#3b6f88" />
    <path d="M1 4l7 3 8-3-6-3z" fill="#2fa9cb" stroke="#3b6f88" strokeWidth=".6" />
    <path d="M8 7v10" stroke="#3b6f88" strokeWidth=".7" />
    <path d="M9 18v12M9 24h8M19 13h9" stroke="#6f8791" strokeWidth="1.400" />
    <path d="M19.500 20.500h7v7h-7z" fill="#fff" stroke="#2c5f7a" strokeWidth="1.500" />
  </Svg>,
  <Svg w={27} h={24} v="0 0 27 24">
    <path d="M8 1h11v7H8zM1 16h11v7H1z" fill="#1f93b8" stroke="#2b7591" />
    <path d="M15.500 16H26v7H15.500z" fill="#f4fafc" stroke="#8fb4c2" />
    <path d="M13.500 8v4M6 16v-4h15v4" stroke="#4f5f68" strokeWidth="1.400" />
  </Svg>,
  <Svg w={29} h={30} v="0 0 29 30">
    <path d="M1 1h27v28H1z" fill="#eaf8fd" stroke="#1d6f8e" />
    <path d="M1 1h27v6H1z" fill="#1f93b8" />
    <path d="M5 13l9-4 10 3v10l-9 5-10-4z" fill="#ffd028" stroke="#a35a12" />
    <path d="M5 13l10 4 9-5M15 17v10" stroke="#a35a12" />
  </Svg>,
  <Svg w={30} h={30} v="0 0 30 30">
    <path d="M.5.500h29v29H.5z" fill="#d4f1fb" stroke="#2c7895" />
    <path d="M1 12q6-12 12 0t12 2l4-1v16H1z" fill="url(#teal)" />
    <path d="M1 10q6-10 12 3t16 1" stroke="#3b6f88" />
    <circle cx="21" cy="7" r="5.500" fill="#ffd62a" stroke="#d98c1c" strokeWidth="1.500" />
    <path d="M1 20h9v-4l7 6-7 6v-4H1z" fill="#f36c2a" stroke="#a33a12" strokeWidth=".7" />
  </Svg>,
  <Svg w={30} h={26} v="0 0 30 26">
    <path d="M13 3q5-4 10 0 3 5-2 11l9 7v2H16z" fill="#f9b52a" stroke="#c4552a" strokeWidth=".8" />
    <path d="M6 5q6-4 11 0 2 7-3 13l10 5v2H0v-2l10-5Q4 12 6 5z" fill="url(#teal)" stroke="#0b5f7e" strokeWidth=".8" />
  </Svg>,
];

const boxBtn = "flex h-[29px] items-center justify-center border border-[#b9bdc6] bg-[#fcfcfc]";

function LeftPanel() {
  return (
    <aside className="flex w-[514px] shrink-0 flex-col">
      <div className="pr-2.5">
        <PanelTitle title="T spoj" />
      </div>
      <div className="mb-0.5 mr-0.5 flex min-h-0 flex-1 border-r border-t border-[#b9bdc6]">
        <nav className="flex w-10 flex-col border-r border-[#b9bdc6] pl-0.5">
          {sideIcons.map((ic, i) =>
            i === 0 ? (
              <button key={i} aria-label="Panel příkazu" className="-mr-px flex h-[58px] items-center justify-center border-b border-l border-[#b9bdc6] bg-[#fcfcfc]">
                {ic}
              </button>
            ) : (
              <button key={i} aria-label={"Panel " + i} className="flex h-[60px] items-center justify-center pr-0.5">
                {ic}
              </button>
            ),
          )}
        </nav>
        <div className="flex min-w-0 flex-1 flex-col px-[3px] pt-[3px]">
          <div className="flex gap-0.5 pb-[5px]">
            <button aria-label="Potvrdit" className={boxBtn + " w-[33px]"}>
              <Svg w={20} h={18} v="0 0 20 18">
                <path d="M1 9l4-2 3 3 8-9 3 2L9 17z" fill="#46cf35" stroke="#1e8a1a" />
              </Svg>
            </button>
            <button aria-label="Zrušit" className={boxBtn + " w-[33px]"}>
              <Svg w={20} h={20} v="0 0 20 20">
                <path d="M1 4l4-3 5 6 5-6 4 3-5 6 5 6-4 3-5-6-5 6-4-3 5-6z" fill="#e5353a" stroke="#a81a1f" />
              </Svg>
            </button>
            <button aria-label="Použít" className={boxBtn + " w-[33px]"}>
              <Svg w={20} h={17} v="0 0 20 17">
                <path d="M12 2H2v13h13V8" stroke="#e02a30" strokeWidth="2.400" />
                <path d="M6 6l3-1 2 2 6-6 2 2-8 9z" fill="#3cc52e" stroke="#1e8a1a" strokeWidth=".6" />
              </Svg>
            </button>
            <span className="flex-1" />
            <button aria-label="Informace" className={boxBtn + " w-[33px]"}>
              <Svg w={16} h={16} v="0 0 16 16">
                <circle cx="8" cy="8" r="7" fill="#1a49b4" stroke="#8da0c8" strokeWidth="1.500" />
                <path d="M7 3.500h2.500v2H7zM6 7h3.500v4H11v1.500H6V11h1.200V8.500H6z" fill="#fff" />
              </Svg>
            </button>
            <button aria-label="Rozbalit" className={boxBtn + " w-[17px]"}>
              <Svg w={10} h={18} v="0 0 10 18">
                <path d="M1 0v17h9" stroke="#2a93b8" strokeWidth="2" />
                <path d="M3 2l2 6-2 6M6 2l3 6-3 6" stroke="#e58a2a" strokeWidth="1.800" />
              </Svg>
            </button>
          </div>
          <div className="flex flex-1 flex-col gap-[3px] bg-[#dde1e9] px-0.5">
            <Section title="Povinné" open>
              <div className="flex h-[52px] pl-[180px]">
                <button aria-label="Oříznout" className="z-10 flex h-[52px] w-[51px] items-center justify-center border-[5px] border-[#ed1c24] bg-[#ffe17b]">
                  <TJoint s={37} />
                </button>
                <button aria-label="Rozdělit" className="mt-1 flex h-[45px] w-11 items-center justify-center border border-[#b9bdc6] bg-[#fcfcfc] pr-1">
                  <TJoint s={37} split />
                </button>
              </div>
              <div className="flex h-7 items-center pl-2.5">
                <label htmlFor="base" className="w-[168px] shrink-0 text-black">
                  Základní konstrukce
                </label>
                <input id="base" className="h-7 w-[175px] border border-[#0a84e8] bg-white px-1 outline-none" />
                <button aria-label="Více možností" className="ml-2 flex">
                  <Svg w={12} h={14} v="0 0 12 14">
                    <path d="M1 1l5 4.500L11 1M1 8l5 4.500L11 8" stroke="#222" strokeWidth="1.400" />
                  </Svg>
                </button>
                <span className="ml-2 h-[26px] w-[11px] border border-[#8f9397] bg-[#00ffff] outline outline-1 -outline-offset-2 outline-white" />
                <button aria-label="Otočit směr" className="ml-1 flex">
                  <Svg w={20} h={18} v="0 0 20 18">
                    <path d="M1 16L9 5 7 3l7-2-1 7-2-2-8 11z" fill="#2392b6" />
                    <path d="M19 2l-7 10 2 2-7 3 1-8 2 2 7-10z" fill="#d0202a" />
                  </Svg>
                </button>
                <span className="w-2.5" />
                <PickDown label="Vybrat základní" c="#c06a6c" f="#dd2c5e" />
              </div>
              <div className="mb-[3px] mt-1 flex h-[27px] items-center pl-2.5">
                <label htmlFor="tool" className="w-[169px] shrink-0 text-black">
                  Konstrukce nástroje
                </label>
                <input id="tool" className="h-[27px] w-[229px] border border-[#b9bdc6] bg-white px-1 outline-none" />
                <span className="ml-px h-[26px] w-[11px] border border-[#8f9397] bg-[#ff9cff] outline outline-1 -outline-offset-2 outline-white" />
                <span className="w-1.5" />
                <PickDown label="Vybrat nástroj" c="#c06a6c" f="#dd2c5e" />
              </div>
            </Section>
            <Section title="Nastavení" open>
              <div className="my-1 flex h-[27px] items-center pl-2.5">
                <label htmlFor="gap" className="w-[169px] shrink-0 text-black">
                  Mezera
                </label>
                <span className="flex h-[27px] w-[226px] items-center border border-[#b9bdc6] bg-white pr-1.5 text-black">
                  <input id="gap" defaultValue="0" className="min-w-0 flex-1 bg-transparent pl-0.5 outline-none" />
                  <span className="mr-2">mm</span>
                  <Svg w={6} h={16} v="0 0 6 16">
                    <path d="M0 4h6L3 1zM0 12h6l-3 3z" fill="#333" />
                  </Svg>
                </span>
                <span className="w-1.5" />
                <PickDown label="Vybrat hodnotu" c="#a3a444" f="#efa42a" />
                <span className="ml-2">
                  <Caret c="#555" />
                </span>
              </div>
            </Section>
          </div>
        </div>
      </div>
    </aside>
  );
}

function Scene() {
  return (
    <svg viewBox="515 240 988 744" preserveAspectRatio="xMinYMin slice" className="absolute inset-0 h-full w-full" aria-hidden="true">
      <path d="M515 299L941 397l-8 19L515 320z" fill="#9bb9c7" />
      <path d="M941 397L1503 252v17L933 416z" fill="#9bb9c7" />
      <path d="M515 320l418 96-1 7-417-96z" fill="#86a1af" />
      <path d="M933 416l570-147v7L932 423z" fill="#8fadbb" />
      <path d="M515 327l417 96 4 53-39-6-382-87z" fill="#7e96a3" />
      <path d="M932 423l571-147v58L985 467l-49 9z" fill="#88a2ae" />
      <path d="M896 440l35 9 5 71 18.500 260L969 984h-34L921 780 902 520z" fill="#7e96a3" />
      <path d="M931 449h7l6 71 18.500 260L977 984h-8l-14.500-204L936 520z" fill="#93b0bd" />
      <path d="M938 449l44-11 5 82 19.500 260L1022 984h-45l-14.500-204L943.500 520z" fill="#88a2ae" />
      <g stroke="#0d1417" strokeWidth="1.200">
        <path
          d="M515 299L941 397 1503 252M515 320l418 96 570-147M515 327l417 96 571-147M941 397l-8 19-1 7 4 55M515 380l423 96.500L1503 331"
          fill="none"
        />
        <path d="M896 440l6 80 19 260 14 204M931 449l5 71 18.500 260L969 984M938 449l5.500 71 19 260L977 984M982 438l5 82 19.500 260 14.500 204" fill="none" />
        <path d="M896 440l35 9M937 449l45-11.500" fill="none" />
        <path d="M515 383l382 87M985 467.500L1503 334" fill="none" strokeDasharray="3 2" strokeWidth="1" />
      </g>
    </svg>
  );
}

function Axes() {
  return (
    <svg width="110" height="90" viewBox="0 0 110 90" className="absolute bottom-[94px] left-8" aria-hidden="true">
      <path d="M55 81L51.500 22" stroke="#2fd62a" strokeWidth="2" />
      <path d="M55 81L24 74" stroke="#f01414" strokeWidth="2" />
      <path d="M55 81L94 70" stroke="#0a0af0" strokeWidth="2" />
      <path d="M51 13l4 16h-7z" fill="#1c8a1a" />
      <path d="M14 71l10-2-1 7z" fill="#d00a0a" />
      <path d="M108 66l-13 0 2 7z" fill="#0606b8" />
    </svg>
  );
}

const cube = (fillTop: string, fillL: string, fillR: string, s: string) => (
  <Svg w={21} h={20} v="0 0 21 20">
    <path d="M1 5l8-4 11 2-7 5z" fill={fillTop} stroke={s} />
    <path d="M1 5l12 3v11L1 15z" fill={fillL} stroke={s} />
    <path d="M13 8l7-5v10l-7 6z" fill={fillR} stroke={s} />
  </Svg>
);

const viewTools: { icon: React.ReactNode; drop?: boolean; label: string }[] = [
  {
    label: "Opustit",
    icon: (
      <Svg w={20} h={18} v="0 0 20 18">
        <path d="M7 5V1h11v16H7v-4M1 9h12M6 5L1.500 9 6 13" stroke="#8f8f8f" strokeWidth="1.800" />
      </Svg>
    ),
  },
  {
    label: "Pohledy",
    drop: true,
    icon: (
      <Svg w={20} h={20} v="0 0 20 20">
        <path d="M0 6l12-5 8 11-12 7z" fill="#cfe6f1" stroke="#7c98a8" />
        <path d="M3 7l4-2 2 3 1-4 3-1 4 8-4 3-3-4-2 5z" fill="#145e86" />
      </Svg>
    ),
  },
  {
    label: "Smazat",
    icon: (
      <Svg w={15} h={16} v="0 0 15 16">
        <path d="M6 6l5-5h4v3L9 10z" fill="#ffd04a" stroke="#a8842a" strokeWidth=".6" />
        <path d="M4 8l2-2 3 4-2 2z" fill="#eee" stroke="#888" strokeWidth=".6" />
        <path d="M0 12l4-4 3 4-4 4H1z" fill="#d5333a" />
      </Svg>
    ),
  },
  {
    label: "Rovina",
    icon: (
      <Svg w={20} h={20} v="0 0 20 20">
        <path d="M1 9l8-4 10 3-8 5z" fill="#ffe83a" stroke="#a98b1c" strokeWidth=".8" />
        <path d="M1 9l10 4v6L1 15z" fill="#5cc0dc" stroke="#13708f" strokeWidth=".8" />
        <path d="M11 13l8-5v6l-8 5z" fill="#0f6f92" stroke="#0b4f6a" strokeWidth=".8" />
        <path d="M10 10V2M8 4l2-3 2 3" stroke="#3b9d3a" strokeWidth="1.200" />
      </Svg>
    ),
  },
  { label: "Stínování", drop: true, icon: cube("#bfe8f6", "#2aa0c4", "#0b5f86", "#1b6a8c") },
  { label: "Drátový", drop: true, icon: cube("#fff", "#fff", "#eee", "#6f94a6") },
  {
    label: "Síť",
    drop: true,
    icon: (
      <Svg w={21} h={20} v="0 0 21 20">
        <path d="M5 2l9 0 6 6-4 9-9 2-6-8z" fill="#ffb91c" stroke="#7a4a10" />
        <path d="M5 2l6 8 9-2M11 10l-4 9M11 10l5 7M11 10L1 11M11 10l3-8" stroke="#7a4a10" />
      </Svg>
    ),
  },
  {
    label: "Zobrazit vše",
    drop: true,
    icon: (
      <Svg w={20} h={20} v="0 0 20 20">
        <path d="M1 1h18v18H1z" fill="#eaf7fc" stroke="#2a93b8" strokeWidth="2" />
        <circle cx="10" cy="9" r="6" fill="#fff" stroke="#888" strokeWidth="1.300" />
        <path d="M8 5h4v7H8z" fill="#ffc92a" stroke="#b5851c" strokeWidth=".7" />
        <path d="M14 13l5 6" stroke="#2a74a0" strokeWidth="2.500" />
      </Svg>
    ),
  },
  {
    label: "Střed",
    drop: true,
    icon: (
      <Svg w={18} h={18} v="0 0 18 18">
        <circle cx="8" cy="10" r="5.500" stroke="#2a93b8" strokeWidth="1.500" />
        <path d="M8 2v16M0 10h16M10 1q6 1 7 7" stroke="#d22a32" strokeWidth="1.600" />
      </Svg>
    ),
  },
  {
    label: "Okno",
    icon: (
      <Svg w={19} h={18} v="0 0 19 18">
        <path d="M.8.800h17.400v16.400H.8z" fill="#fff" stroke="#4f93ad" strokeWidth="1.600" />
        <path d="M3 11h5v5H3z" fill="#14608a" />
        <path d="M4 4h4M13 4l2 1M13 14l3-5" stroke="#5cbcd8" strokeWidth="1.500" />
      </Svg>
    ),
  },
  {
    label: "Kóta",
    drop: true,
    icon: (
      <Svg w={16} h={19} v="0 0 16 19">
        <path d="M1 0v14M15 0v14M2 6h12M5 3.500L2 6l3 2.500M11 3.500L14 6l-3 2.500" stroke="#1e7f9f" strokeWidth="1.500" />
        <path d="M1 17h14" stroke="#d0202a" strokeWidth="2.500" />
      </Svg>
    ),
  },
  {
    label: "Displej",
    drop: true,
    icon: (
      <Svg w={22} h={20} v="0 0 22 20">
        <path d="M1 1h20v15H1z" fill="#8d8f92" stroke="#4c4e50" />
        <path d="M3 3h16v11H3z" fill="url(#screen)" />
        <path d="M5 17h12l-2 2.500H7z" fill="#909396" />
      </Svg>
    ),
  },
  { label: "Barva čáry", icon: <span className="h-[11px] w-5 bg-black" /> },
  { label: "Barva plochy", icon: <span className="size-5 border border-black bg-[#bfe5f5]" /> },
  {
    label: "Hladiny",
    drop: true,
    icon: (
      <Svg w={21} h={16} v="0 0 21 16">
        <path d="M0 10l10 5 10-5-9-5zM0 7l10 5 10-5" fill="#bfe3ee" stroke="#3b8fa8" />
        <path d="M0 2q6 1 9-2l11 4-9 6z" fill="#35cdb0" stroke="#1b8d7a" strokeWidth=".7" />
      </Svg>
    ),
  },
];

function Viewport() {
  return (
    <main className="flex min-w-0 flex-1 flex-col">
      <div className="flex h-[26px] shrink-0 items-stretch">
        <div className="z-10 -mb-px ml-px flex w-[213px] items-center border border-b-0 border-[#b9bdc6] bg-white pl-[38px] text-black">
          * Sestava002.Z3ASM
          <button aria-label="Zavřít kartu" className="ml-2.5">
            <Svg w={13} h={12} v="0 0 13 12">
              <path d="M1.500 1l10 10M11.500 1l-10 10" stroke="#7a643c" strokeWidth="2.600" />
            </Svg>
          </button>
        </div>
        <button aria-label="Nová karta" className="ml-2">
          <Svg w={13} h={13} v="0 0 13 13">
            <path d="M6.500 0v13M0 6.500h13" stroke="#a8a3a2" strokeWidth="2.600" />
          </Svg>
        </button>
        <span className="flex-1" />
        <button aria-label="Seznam karet" className="mr-2">
          <Svg w={11} h={11} v="0 0 11 11">
            <path d="M0 0h11v3H0zM0 5h11l-5.500 6z" fill="#9a9391" />
          </Svg>
        </button>
      </div>
      <div className="mb-px flex min-h-0 flex-1 border border-[#b9bdc6] pr-px">
        <div className="relative min-w-0 flex-1 overflow-hidden bg-linear-to-b from-white to-[#a0a0a0]">
          <Scene />
          <div className="relative flex h-[30px] items-center pl-[139px]">
            {viewTools.map((t) => (
              <button key={t.label} aria-label={t.label} className={"flex shrink-0 items-center " + (t.drop ? "mr-1" : "")}>
                <span className="flex w-7 justify-center">{t.icon}</span>
                {t.drop && (
                  <span className="flex w-3 justify-center">
                    <Caret />
                  </span>
                )}
              </button>
            ))}
            <span className="relative ml-1 flex h-[26px] w-36 items-center gap-2 border border-[#cfd2d6] bg-[#efefef] pl-2.5">
              <Svg w={10} h={15} v="0 0 10 15">
                <path d="M3 10Q.5 7 .7 4.500 1 1 5 .7q4 .3 4.300 3.800Q9.500 7 7 10v2H3zM3.500 14h3" fill="#fafafa" stroke="#9a9a9a" />
              </Svg>
              <Svg w={14} h={14} v="0 0 14 14">
                <circle cx="7" cy="7" r="6" fill="#e6e6e6" stroke="#9a9a9a" />
              </Svg>
              <select aria-label="Hladina" disabled className="flex-1 appearance-none bg-transparent text-[#7b7f84]">
                <option>Hladina000</option>
              </select>
              <span className="pointer-events-none absolute right-[7px]">
                <Caret c="#a9a9a9" />
              </span>
            </span>
          </div>
          <div className="relative flex flex-col gap-1.5 pl-[22px] text-black">
            <p className="h-5 leading-4">&lt;pravý-klik&gt; pro volby zadání entity.</p>
            <p className="h-5 leading-4">&lt;F8&gt; nebo &lt;Shift-roll&gt; pro nalezení dalšího platného nastavení filtru.</p>
          </div>
          <Axes />
          <span className="absolute bottom-[165px] left-[77px] text-[18px] leading-6 text-[#2fd62a]">Y</span>
          <span className="absolute bottom-[102px] left-[34px] text-[18px] leading-6 text-[#f01414]">X</span>
          <span className="absolute bottom-[105px] left-[141px] text-[18px] leading-6 text-[#0a0af0]">Z</span>
          <span className="absolute -bottom-px left-1 text-[20px] leading-6 text-black">563.834mm</span>
        </div>
      </div>
    </main>
  );
}

const Folder = ({ s }: { s: number }) => (
  <Svg w={s} h={s} v="0 0 28 28">
    <path d="M1 4h4l1-3h5l2 3v2h14v19H1z" fill="url(#folder)" stroke="#c07a1a" strokeWidth=".8" />
    <path d="M1 6h26" stroke="#d98c1c" strokeWidth=".8" />
  </Svg>
);

const rightIcons = [
  <Folder s={28} />,
  <Svg w={28} h={30} v="0 0 28 30">
    <path d="M1 4h3l1-3h6l1 3h15v22H1z" fill="url(#folder)" stroke="#b0571a" />
    <path d="M4 26L24 6M4 20v6h7M20 5l5 5" stroke="#12607f" strokeWidth="5" />
    <circle cx="15" cy="14" r="4" stroke="#dff3fa" strokeWidth="2" />
  </Svg>,
  <Svg w={28} h={22} v="0 0 28 22">
    <path d="M0 8l14 7 14-7v6l-14 7-14-7zM0 11l14 7 14-7" fill="#e5f2f7" stroke="#3f7f98" />
    <path d="M0 2q8 3 15-2l13 6-13 8z" fill="#45dcc0" stroke="#1b8d7a" strokeWidth=".8" />
  </Svg>,
  <Svg w={28} h={28} v="0 0 28 28">
    <path d="M1 4h4l1-3h5l2 3v2h14v19H1z" fill="url(#folder)" stroke="#c07a1a" strokeWidth=".8" />
    <circle cx="20" cy="18" r="7" fill="#dff3fa" stroke="#7a8a92" strokeWidth="1.500" />
    <path d="M20 12v6h-6a6 6 0 0 1 6-6z" fill="#2aa0c4" />
    <path d="M14 18a6 6 0 0 0 12 0z" fill="#f28a1c" />
  </Svg>,
  <Svg w={28} h={28} v="0 0 28 28">
    <Blob x={0} y={0} />
    <path d="M9 17h5v8H9z" fill="#e22a22" />
    <path d="M14 17h5v8h-5z" fill="#5aa52a" />
    <path d="M19 17h9v8h-9z" fill="#2744a4" />
  </Svg>,
];

function BigArrow({ d }: { d: string }) {
  return (
    <Svg w={20} h={20} v="0 0 20 20">
      <path d={d} fill="url(#gray)" stroke="#a5a5a5" />
    </Svg>
  );
}

function RightPanel() {
  const off = "flex h-[31px] w-[35px] items-center justify-center border border-[#d3d5d9] bg-[#eceef0]";
  return (
    <aside className="flex w-[405px] shrink-0 flex-col">
      <PanelTitle title="Prohlížeč souborů" />
      <div className="ml-px flex h-[595px] border-t border-[#b9bdc6]">
        <div className="flex min-w-0 flex-1 flex-col border-b border-l border-r border-[#b9bdc6] bg-[#dde1e9]">
          <div className="bg-[#e2e6e9] pb-2 pr-px pt-px">
            <div className="flex gap-[3px] pb-[3px]">
              <button aria-label="Zpět ve složkách" className={off}>
                <BigArrow d="M1 10l7-6v4h11v4H8v4z" />
              </button>
              <button aria-label="Vpřed ve složkách" className={off}>
                <BigArrow d="M19 10l-7-6v4H1v4h11v4z" />
              </button>
              <button aria-label="O úroveň výš" className={off}>
                <BigArrow d="M10 1l7 8h-4v10H7V9H3z" />
              </button>
              <button aria-label="Aktualizovat" className="flex h-[31px] w-[35px] items-center justify-center border border-[#b9bdc6] bg-white">
                <Svg w={22} h={20} v="0 0 22 20">
                  <path d="M2 12Q0 4 10 4h4M20 8q2 8-8 8H8" stroke="#158fb8" strokeWidth="3" />
                  <path d="M12 0v8l7-4zM10 12v8l-7-4z" fill="#1fa5cf" stroke="#0c6584" strokeWidth=".7" />
                </Svg>
              </button>
            </div>
            <ul className="h-[87px] border border-[#b9bdc6] bg-white">
              {["Oblíbené", "(C:)"].map((t, i) => (
                <li key={t} className={"flex h-[23px] items-center pl-1.5 text-[#1d2024] " + (i ? "border-b border-[#e8e8e8] bg-[#f5f5f5]" : "")}>
                  <Svg w={7} h={10} v="0 0 7 10">
                    <path d="M1 .5L5.500 5 1 9.500" stroke="#777" strokeWidth="1.400" />
                  </Svg>
                  <span className="ml-2 mr-[3px] flex w-5 justify-center">
                    {i ? (
                      <Folder s={20} />
                    ) : (
                      <Svg w={18} h={17} v="0 0 18 17">
                        <path d="M9 0l2.600 6H18l-5 4 2 7-6-4-6 4 2-7-5-4h6.400z" fill="#1fa5cf" />
                      </Svg>
                    )}
                  </span>
                  {t}
                </li>
              ))}
              <li className="mt-[23px] h-4 bg-[#f5f5f5]" />
            </ul>
          </div>
          <div className="flex flex-col gap-0.5 px-px">
            <Section title="Hledat" open>
              <div className="flex gap-[3px] px-0.5 pb-0.5 pt-[3px]">
                <span className="flex h-[31px] min-w-0 flex-1 items-center border border-[#b9bdc6] bg-white pr-[7px]">
                  <input aria-label="Hledat soubor" placeholder="Hledat..." className="min-w-0 flex-1 bg-transparent pl-1 outline-none placeholder:text-[#85898e]" />
                  <Caret />
                </span>
                <button aria-label="Spustit hledání" className="flex w-[47px] items-center justify-center border border-[#b9bdc6] bg-[#fcfcfc]">
                  <Svg w={19} h={18} v="0 0 19 18">
                    <circle cx="8.500" cy="8.500" r="7.500" stroke="#8a9096" />
                    <path d="M14 13l4 4" stroke="#3a8fb5" strokeWidth="2" />
                  </Svg>
                </button>
                <button aria-label="Nástroje hledání" className="flex w-[47px] items-center justify-center border border-[#b9bdc6] bg-[#fcfcfc]">
                  <Svg w={19} h={19} v="0 0 19 19">
                    <path d="M1 1l4 1 4 6-3 2-4-5z" fill="#c9cbcd" stroke="#777" strokeWidth=".7" />
                    <path d="M7 8q5-1 11 5M6 9q1 5 7 9" stroke="#d0202a" strokeWidth="2.600" />
                  </Svg>
                </button>
              </div>
            </Section>
            <Section title="Seznam souborů" />
            <Section title="Náhled" />
          </div>
        </div>
        <nav className="flex w-7 flex-col overflow-hidden">
          {rightIcons.map((ic, i) =>
            i === 0 ? (
              <button key={i} aria-label="Soubory" className="-ml-px flex h-[59px] shrink-0 items-center border-b border-[#b9bdc6] bg-[#fcfcfc] pl-1">
                {ic}
              </button>
            ) : (
              <button key={i} aria-label={"Karta " + i} className="flex h-[60px] shrink-0 items-center pl-[3px]">
                {ic}
              </button>
            ),
          )}
        </nav>
      </div>
      <div className="h-[3px]" />
      <PanelTitle title="Výstup" stop />
      <div className="mb-0.5 ml-px flex min-h-0 flex-1 border border-r-0 border-[#b9bdc6] bg-white">
        <div className="flex min-w-0 flex-1 flex-col justify-end overflow-hidden pb-0.5 pl-1 leading-5 text-black">
          <p className="whitespace-nowrap">[Sestava002_Čtvercové duté průřezy_003] doložen jako</p>
          <p className="whitespace-nowrap">komponent [_Sestava002_Čtvercové duté průřezy_003].</p>
          <p>T spoj</p>
          <p>T spoj</p>
          <p>T spoj</p>
          <p>T spoj</p>
        </div>
        <div className="flex w-[13px] flex-col items-end overflow-hidden bg-[#d9dce4] pt-2">
          <Svg w={9} h={5} v="0 0 9 5">
            <path d="M0 5h9L4.500 0z" fill="#444" />
          </Svg>
          <span className="flex-1" />
          <span className="flex h-[23px] w-full flex-col items-end justify-center gap-0.5 border border-r-0 border-[#7f8a9a] bg-[#eef0f4]">
            <span className="h-px w-2 bg-[#7c8290]" />
            <span className="h-px w-2 bg-[#7c8290]" />
            <span className="h-px w-2 bg-[#7c8290]" />
          </span>
          <span className="mb-2 mt-2">
            <Svg w={9} h={5} v="0 0 9 5">
              <path d="M0 0h9L4.500 5z" fill="#444" />
            </Svg>
          </span>
        </div>
      </div>
    </aside>
  );
}

function StatusBar() {
  const b = "flex h-[26px] w-[26px] items-start justify-center border border-[#c79b36] bg-[#ffe17b] pt-0.5";
  return (
    <footer className="flex h-[26px] shrink-0 overflow-hidden">
      <p className="flex-1 whitespace-pre pl-[5px] pt-2 leading-5 text-[#3c4146]">{"Vyberte prosím lineární konstrukční prvek.  <střední-klik> až bude dokončeno."}</p>
      <div className="mt-0.5 flex gap-[9px] border-l border-[#8e9297] pl-4 pr-2.5 pt-[3px]">
        <button aria-label="Správce" className={b}>
          <Svg w={18} h={18} v="0 0 18 18">
            <path d="M.5.500h17v17H.5z" fill="#fff" stroke="#4a6fc0" />
            <path d="M1 1h16v3H1z" fill="#5c86d4" />
            <path d="M2 6h3v10H2z" fill="#b9c7e4" />
            <path d="M7 6h8l1 3-2-1H8z" fill="#444" />
            <path d="M10 8h3v9h-3z" fill="#d0202a" />
          </Svg>
        </button>
        <button aria-label="Zobrazení" className={b}>
          <Svg w={20} h={17} v="0 0 20 17">
            <path d="M1 1h18v12H1z" fill="#2bb5d6" stroke="#3a4a55" />
            <path d="M6 13h8v3H6z" fill="#3a4a55" />
          </Svg>
        </button>
        <button aria-label="Zprávy" className={b}>
          <Svg w={18} h={18} v="0 0 18 18">
            <path d="M.5.500h17v17H.5z" fill="#f2f5fb" stroke="#4a6fc0" />
            <path d="M1 1h16v3H1z" fill="#5c86d4" />
            <path d="M3 7.500h12M3 10.500h12M3 13.500h12" stroke="#8f949a" strokeWidth="1.300" />
          </Svg>
        </button>
      </div>
      <div className="mt-[3px] w-[430px] border-l border-t border-[#b9bdc6] bg-white" />
    </footer>
  );
}

export default function App() {
  return (
    <div className="flex h-screen flex-col overflow-hidden bg-[#e2e6e9] font-['Open_Sans','Noto_Sans',sans-serif] text-[14px] leading-5">
      <SharedGradients />
      <TitleBar />
      <TabRow />
      <Ribbon />
      <FilterBar />
      <div className="flex min-h-0 flex-1">
        <LeftPanel />
        <Viewport />
        <RightPanel />
      </div>
      <StatusBar />
    </div>
  );
}
